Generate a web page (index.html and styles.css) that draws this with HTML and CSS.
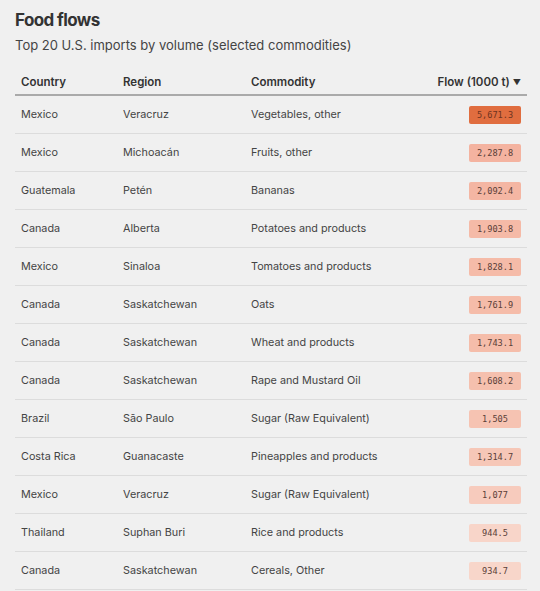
FILE: index.html
```html
<!DOCTYPE html>
<html>
<head>
<meta charset="utf-8">
<link rel="stylesheet" href="styles.css">
</head>
<body>
<main class="page">
  <h1 class="title">Food flows</h1>
  <p class="subtitle">Top 20 U.S. imports by volume (selected commodities)</p>
  <table class="flows">
    <thead>
      <tr>
        <th class="c-country">Country</th>
        <th class="c-region">Region</th>
        <th class="c-commodity">Commodity</th>
        <th class="c-flow">Flow (1000 t) <span class="sort">▼</span></th>
      </tr>
    </thead>
    <tbody>
      <tr><td>Mexico</td><td>Veracruz</td><td>Vegetables, other</td><td class="c-flow"><span class="badge badge-strong" style="background:#e06d3f">5,671.3</span></td></tr>
      <tr><td>Mexico</td><td>Michoacán</td><td>Fruits, other</td><td class="c-flow"><span class="badge" style="background:#f4b3a0">2,287.8</span></td></tr>
      <tr><td>Guatemala</td><td>Petén</td><td>Bananas</td><td class="c-flow"><span class="badge" style="background:#f4b6a3">2,092.4</span></td></tr>
      <tr><td>Canada</td><td>Alberta</td><td>Potatoes and products</td><td class="c-flow"><span class="badge" style="background:#f5baa7">1,903.8</span></td></tr>
      <tr><td>Mexico</td><td>Sinaloa</td><td>Tomatoes and products</td><td class="c-flow"><span class="badge" style="background:#f5bba8">1,828.1</span></td></tr>
      <tr><td>Canada</td><td>Saskatchewan</td><td>Oats</td><td class="c-flow"><span class="badge" style="background:#f5bca9">1,761.9</span></td></tr>
      <tr><td>Canada</td><td>Saskatchewan</td><td>Wheat and products</td><td class="c-flow"><span class="badge" style="background:#f5bdaa">1,743.1</span></td></tr>
      <tr><td>Canada</td><td>Saskatchewan</td><td>Rape and Mustard Oil</td><td class="c-flow"><span class="badge" style="background:#f5c0ae">1,608.2</span></td></tr>
      <tr><td>Brazil</td><td>São Paulo</td><td>Sugar (Raw Equivalent)</td><td class="c-flow"><span class="badge" style="background:#f6c3b2">1,505</span></td></tr>
      <tr><td>Costa Rica</td><td>Guanacaste</td><td>Pineapples and products</td><td class="c-flow"><span class="badge" style="background:#f6c7b7">1,314.7</span></td></tr>
      <tr><td>Mexico</td><td>Veracruz</td><td>Sugar (Raw Equivalent)</td><td class="c-flow"><span class="badge" style="background:#f7cbbd">1,077</span></td></tr>
      <tr><td>Thailand</td><td>Suphan Buri</td><td>Rice and products</td><td class="c-flow"><span class="badge" style="background:#f8d5c9">944.5</span></td></tr>
      <tr><td>Canada</td><td>Saskatchewan</td><td>Cereals, Other</td><td class="c-flow"><span class="badge" style="background:#f8d6ca">934.7</span></td></tr>
    </tbody>
  </table>
</main>
</body>
</html>
```

FILE: styles.css
```css
html, body {
  margin: 0;
  padding: 0;
  background: #f0f0f0;
}
body {
  font-family: Inter, "Noto Sans", "Liberation Sans", sans-serif;
  color: #444;
}
.page {
  padding: 8px 13px 0 15px;
}
.title {
  margin: 0;
  font-size: 17px;
  line-height: 24px;
  font-weight: 700;
  color: #333;
  letter-spacing: -0.6px;
}
.subtitle {
  margin: 3px 0 0;
  font-size: 13px;
  line-height: 20px;
  color: #444;
}
.flows {
  width: 100%;
  margin-top: 15px;
  border-collapse: collapse;
  font-size: 10.8px;
}
.flows th {
  text-align: left;
  font-weight: 600;
  font-size: 11.5px;
  color: #333;
  height: 24px;
  padding: 0 6px;
  border-bottom: 2px solid #aaa;
  vertical-align: middle;
}
.sort {
  font-size: 8px;
  vertical-align: 1px;
}
.flows td {
  height: 37px;
  padding: 0 6px;
  border-bottom: 1px solid #dcdcdc;
  color: #444;
}
.c-country { width: 90px; }
.c-region { width: 116px; }
.flows .c-flow {
  text-align: right;
  padding-right: 6px;
}
.badge {
  display: inline-block;
  min-width: 52px;
  height: 18px;
  line-height: 18px;
  text-align: center;
  border-radius: 2px;
  font-family: "DejaVu Sans Mono", "Liberation Mono", monospace;
  font-size: 8.6px;
  color: #5a4038;
  vertical-align: middle;
}
.badge-strong {
  color: #6e3320;
}
```
